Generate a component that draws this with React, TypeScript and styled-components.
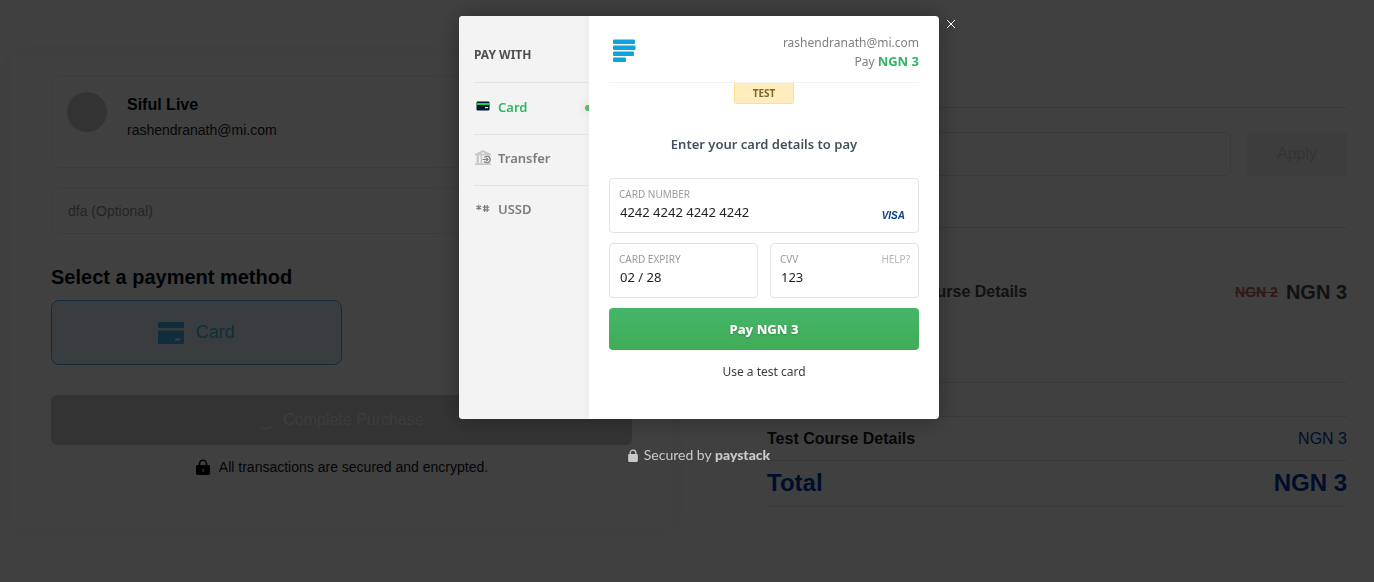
import React from "react";
import styled, { createGlobalStyle, css } from "styled-components";

const GlobalStyle = createGlobalStyle`
  *, *::before, *::after { box-sizing: border-box; }
  body {
    margin: 0;
    background: #ffffff;
    font-family: "Liberation Sans", Arial, sans-serif;
  }
  button, input { font: inherit; }
  h1, h2, p { margin: 0; }
`;

const modalFont = css`
  font-family: "Noto Sans", "Open Sans", sans-serif;
`;

/* Checkout page */

const Page = styled.main`
  display: grid;
  grid-template-columns: 661fr 580fr;
  gap: 95px;
  align-items: start;
  min-height: 100vh;
  padding: 56px 27px 54px 11px;
`;

const CheckoutCard = styled.section`
  padding: 20px 40px 48px;
  box-shadow: 0 0 28px rgba(0, 0, 0, 0.06);
`;

const UserBox = styled.div`
  display: flex;
  gap: 20px;
  height: 92px;
  padding: 15px;
  border: 1px solid #ececec;
  border-radius: 8px;
`;

const Avatar = styled.div`
  width: 40px;
  height: 40px;
  border-radius: 50%;
  background: #cccccc;
`;

const UserName = styled.p`
  font-size: 16px;
  line-height: 26px;
  font-weight: 700;
  color: #000c18;
`;

const UserEmail = styled.p`
  font-size: 14px;
  line-height: 24px;
  color: #222222;
`;

const NoteInput = styled.input`
  display: block;
  width: 100%;
  height: 46px;
  margin-top: 20px;
  padding: 0 16px;
  border: 1px solid #ececec;
  border-radius: 8px;
  background: transparent;
  font-size: 14px;
  &::placeholder { color: #909090; opacity: 1; }
`;

const MethodTitle = styled.h1`
  margin-top: 30px;
  font-size: 20px;
  line-height: 26px;
  color: #000c18;
`;

const MethodButton = styled.button`
  display: flex;
  align-items: center;
  justify-content: center;
  gap: 12px;
  width: 50%;
  height: 65px;
  margin-top: 10px;
  border: 1px solid #44b4f0;
  border-radius: 8px;
  background: #e8f4fc;
  color: #44b4f0;
  font-size: 18px;
`;

const PurchaseButton = styled.button`
  display: flex;
  align-items: center;
  justify-content: center;
  gap: 10px;
  width: 100%;
  height: 50px;
  margin-top: 30px;
  border: 0;
  border-radius: 6px;
  background: #cccccc;
  color: #f0f0f0;
  font-size: 16px;
`;

const SecureNote = styled.p`
  display: flex;
  align-items: center;
  justify-content: center;
  gap: 8px;
  margin-top: 10px;
  font-size: 14px;
  line-height: 24px;
  color: #111111;
`;

/* Order summary */

const Summary = styled.section`
  padding-top: 51px;
`;

const CouponRow = styled.form`
  display: flex;
  gap: 16px;
  height: 121px;
  padding-top: 24px;
  border-top: 1px solid #e2e2e2;
  border-bottom: 1px solid #e2e2e2;
`;

const CouponInput = styled.input`
  flex: 1;
  min-width: 0;
  height: 44px;
  padding: 0 16px;
  border: 1px solid #e2e2e2;
  border-radius: 6px;
  background: transparent;
`;

const ApplyButton = styled.button`
  width: 100px;
  height: 44px;
  border: 0;
  border-radius: 4px;
  background: #f4f4f4;
  color: #cccccc;
  font-size: 16px;
`;

const CourseRow = styled.div`
  display: flex;
  align-items: center;
  gap: 8px;
  height: 155px;
  padding-bottom: 26px;
  border-bottom: 1px solid #e2e2e2;
`;

const CourseName = styled.h2`
  flex: 1;
  padding-left: 112px;
  font-size: 16px;
  color: #44474f;
`;

const OldPrice = styled.s`
  font-size: 14px;
  font-weight: 700;
  color: #c86464;
`;

const Price = styled.strong`
  font-size: 20px;
  color: #44474f;
`;

const Totals = styled.table`
  width: 100%;
  margin-top: 33px;
  border-collapse: collapse;
  tr { border-top: 1px solid #e2e2e2; border-bottom: 1px solid #e2e2e2; }
  th, td { height: 44px; padding: 0; font-size: 16px; }
  th { text-align: left; color: #181818; }
  td { text-align: right; color: #0038a8; }
`;

const TotalRow = styled.tr`
  && th, && td {
    height: 46px;
    padding-bottom: 2px;
    font-size: 24px;
    font-weight: 700;
    color: #0038a8;
  }
`;

/* Payment dialog */

const Overlay = styled.div`
  position: fixed;
  inset: 0;
  display: flex;
  flex-direction: column;
  align-items: center;
  padding: 16px 0 0 24px;
  background: rgba(0, 0, 0, 0.75);
  ${modalFont}
`;

const Dialog = styled.div`
  position: relative;
  display: flex;
  width: 480px;
  max-width: 100%;
  border-radius: 4px;
  background: #ffffff;
  box-shadow: 0 0 24px rgba(0, 0, 0, 0.35);
`;

const CloseButton = styled.button`
  position: absolute;
  top: 0;
  right: -20px;
  display: flex;
  align-items: center;
  justify-content: center;
  width: 16px;
  height: 16px;
  padding: 0;
  border: 0;
  background: none;
`;

const Channels = styled.nav`
  width: 130px;
  padding-left: 15px;
  overflow: hidden;
  border-radius: 4px 0 0 4px;
  background: linear-gradient(to left, #efefef, #f3f3f3 8px);
`;

const ChannelsTitle = styled.h2`
  padding: 29px 0 17px;
  font-size: 12px;
  line-height: 20px;
  color: #4f4f4f;
`;

const Channel = styled.button<{ $active?: boolean }>`
  position: relative;
  display: flex;
  align-items: center;
  gap: 6px;
  width: 100%;
  height: ${(p) => (p.$active ? "52px" : "51px")};
  padding: 0 0 4px;
  border: 0;
  border-top: 1px solid #e2e2e2;
  background: none;
  font-size: 13px;
  font-weight: 600;
  color: ${(p) => (p.$active ? "#2fb566" : "#7c7c7c")};
`;

const ActiveDot = styled.span`
  position: absolute;
  top: 22px;
  right: -2px;
  width: 6px;
  height: 6px;
  border-radius: 50%;
  background: #5cb860;
  box-shadow: 0 0 8px 4px rgba(76, 175, 80, 0.08);
`;

const Content = styled.div`
  flex: 1;
  padding: 0 20px 37px;
  text-align: center;
`;

const Header = styled.header`
  display: flex;
  justify-content: space-between;
  height: 67px;
  padding: 18px 0 0 4px;
  border-bottom: 1px solid #f2f2f2;
`;

const Logo = styled.svg`
  margin-top: 5px;
`;

const Payer = styled.div`
  text-align: right;
  font-size: 12px;
  line-height: 18px;
  color: #7f7f7f;
  strong { font-size: 13px; color: #2fb566; }
`;

const TestBadge = styled.span`
  display: block;
  width: 60px;
  height: 21px;
  margin: 0 auto;
  border: 1px solid #ffe08a;
  border-top: 0;
  border-radius: 0 0 3px 3px;
  background: #ffedbd;
  font-size: 10px;
  line-height: 20px;
  font-weight: 700;
  color: #7d6528;
`;

const Title = styled.h2`
  margin: 30px 0 24px;
  font-size: 13px;
  line-height: 20px;
  font-weight: 600;
  color: #44505f;
`;

const Fields = styled.div`
  display: grid;
  grid-template-columns: 1fr 1fr;
  gap: 10px 12px;
`;

const Field = styled.div<{ $wide?: boolean }>`
  position: relative;
  grid-column: ${(p) => (p.$wide ? "1 / -1" : "auto")};
  display: flex;
  flex-wrap: wrap;
  align-content: flex-start;
  justify-content: space-between;
  height: 55px;
  padding: 7px 8px 0 9px;
  border: 1px solid #e2e2e2;
  border-radius: 4px;
  font-size: 10px;
  line-height: 16px;
  color: #9a9a9a;
  input {
    width: 100%;
    height: 20px;
    padding: 0 1px;
    border: 0;
    outline: 0;
    background: none;
    font-size: 13px;
    line-height: 20px;
    color: #222222;
  }
`;

const HelpLink = styled.a`
  color: #b5b5b5;
  text-decoration: none;
`;

const VisaMark = styled.span`
  position: absolute;
  right: 13px;
  bottom: 9px;
  font-family: "Liberation Sans", Arial, sans-serif;
  font-size: 10px;
  line-height: 14px;
  font-weight: 700;
  font-style: italic;
  color: #0a3c8c;
`;

const PayButton = styled.button`
  width: 100%;
  height: 42px;
  margin-top: 10px;
  border: 0;
  border-radius: 4px;
  background: linear-gradient(#44b669, #42ab56);
  font-size: 13px;
  font-weight: 800;
  color: #ffffff;
  text-shadow: 0 1px 2px rgba(0, 0, 0, 0.2);
`;

const TestCardButton = styled.button`
  margin-top: 12px;
  padding: 0;
  border: 0;
  background: none;
  font-size: 12px;
  line-height: 20px;
  color: #3c3c3c;
`;

const SecuredBy = styled.p`
  display: flex;
  align-items: center;
  gap: 6px;
  margin-top: 26px;
  font-family: Lato, sans-serif;
  font-size: 14px;
  line-height: 20px;
  color: #c9c9c9;
  strong { font-weight: 900; }
`;

const PadlockIcon = ({ size, color, keyhole }: { size: number; color: string; keyhole?: boolean }) => (
  <svg width={keyhole ? size : size - 3} height={size} viewBox={keyhole ? "-1 0 16 16" : "1 0 12 16"} aria-hidden="true">
    <path d="M3.500 7V4.800a3.500 3.500 0 0 1 7 0V7" fill="none" stroke={color} strokeWidth="1.600" />
    <rect x={keyhole ? 0 : 1} y="6" width={keyhole ? 14 : 12} height="10" rx="1.400" fill={color} />
    {keyhole && <rect x="6.300" y="9.500" width="1.500" height="3.500" fill="#aaaaaa" />}
  </svg>
);

const MethodCardIcon = () => (
  <svg width="26" height="24" viewBox="0 0 26 24" aria-hidden="true">
    <path fill="#44b4f0" d="M1.5 1h23A1.5 1.5 0 0 1 26 2.500V7H0V2.500A1.500 1.500 0 0 1 1.500 1Z" />
    <path fill="#44b4f0" fillRule="evenodd" d="M0 9.500h26v12a1.500 1.500 0 0 1-1.500 1.500h-23A1.500 1.500 0 0 1 0 21.500ZM17 17.500v2h5v-2Z" />
  </svg>
);

const Spinner = () => (
  <svg width="14" height="22" viewBox="0 0 14 22" aria-hidden="true">
    <path d="M1.500 17.500a7.500 7.500 0 0 0 11 0" fill="none" stroke="#f0f0f0" strokeWidth="1.200" />
  </svg>
);

const CardIcon = () => (
  <svg width="18" height="16" viewBox="0 0 18 16" aria-hidden="true">
    <rect x="2.500" y="2.500" width="13" height="9" rx="1.200" fill="#011b33" />
    <rect x="2.500" y="4" width="13" height="2" fill="#24d04f" />
    <rect x="11" y="8" width="3" height="1.200" fill="#e8edf2" />
  </svg>
);

const TransferIcon = () => (
  <svg width="18" height="16" viewBox="0 0 18 16" aria-hidden="true">
    <path fill="#c8c8c8" fillRule="evenodd" d="M9 0 17 4v1.500H1V4ZM9 2.200a1 1 0 1 0 0 2 1 1 0 0 0 0-2Z" />
    <path fill="#c8c8c8" d="M2.500 5.500H5v7.500H2.500ZM6.500 5.500h1.700v7.500H6.500ZM12 5.500h3.500v7.500H12ZM1 13.200h16V15H1Z" />
    <circle cx="12.800" cy="9.500" r="4.200" fill="#f3f3f3" />
    <path d="M10.200 7.700a3.300 3.300 0 1 1 0 3.600M8.500 9.500h5.300M12.200 7.800l1.800 1.700-1.800 1.700" fill="none" stroke="#7c7c7c" strokeWidth="1.200" />
  </svg>
);

const UssdIcon = () => (
  <svg width="18" height="16" viewBox="0 0 18 16" aria-hidden="true">
    <path d="M4.800 3.800v5.400M2.400 5.100l4.800 2.800M7.200 5.100 2.400 7.900" stroke="#7c7c7c" strokeWidth="1.100" />
    <path d="M10.600 4v7M13.200 4v7M8.800 6.200h6.400M8.800 8.900h6.400" stroke="#7c7c7c" strokeWidth="1.200" />
  </svg>
);

export default function App() {
  return (
    <>
      <GlobalStyle />
      <Page>
        <CheckoutCard>
          <UserBox>
            <Avatar />
            <div>
              <UserName>Siful Live</UserName>
              <UserEmail>rashendranath@mi.com</UserEmail>
            </div>
          </UserBox>
          <NoteInput aria-label="dfa" placeholder="dfa (Optional)" />
          <MethodTitle>Select a payment method</MethodTitle>
          <MethodButton type="button">
            <MethodCardIcon />
            Card
          </MethodButton>
          <PurchaseButton type="button">
            <Spinner />
            Complete Purchase
          </PurchaseButton>
          <SecureNote>
            <PadlockIcon size={16} color="#000000" keyhole />
            All transactions are secured and encrypted.
          </SecureNote>
        </CheckoutCard>

        <Summary>
          <CouponRow>
            <CouponInput aria-label="Coupon" />
            <ApplyButton type="button">Apply</ApplyButton>
          </CouponRow>
          <CourseRow>
            <CourseName>Test Course Details</CourseName>
            <OldPrice>NGN 2</OldPrice>
            <Price>NGN 3</Price>
          </CourseRow>
          <Totals>
            <tbody>
              <tr>
                <th scope="row">Test Course Details</th>
                <td>NGN 3</td>
              </tr>
              <TotalRow>
                <th scope="row">Total</th>
                <td>NGN 3</td>
              </TotalRow>
            </tbody>
          </Totals>
        </Summary>
      </Page>

      <Overlay>
        <Dialog role="dialog" aria-label="Payment">
          <Channels>
            <ChannelsTitle>PAY WITH</ChannelsTitle>
            <Channel type="button" $active>
              <CardIcon />
              Card
              <ActiveDot />
            </Channel>
            <Channel type="button">
              <TransferIcon />
              Transfer
            </Channel>
            <Channel type="button">
              <UssdIcon />
              USSD
            </Channel>
          </Channels>
          <Content>
            <Header>
              <Logo width="23" height="23" viewBox="0 0 23 23" aria-hidden="true">
                <g fill="#0ba4db">
                  <rect x="0" y="0.500" width="22" height="4.500" rx="1" />
                  <rect x="0" y="6.500" width="22.500" height="4.500" rx="1" />
                  <rect x="0" y="12.500" width="21" height="4.500" rx="1" />
                  <rect x="0" y="18.500" width="13" height="4.500" rx="1" />
                </g>
              </Logo>
              <Payer>
                <div>rashendranath@mi.com</div>
                <div>
                  Pay <strong>NGN 3</strong>
                </div>
              </Payer>
            </Header>
            <TestBadge>TEST</TestBadge>
            <Title>Enter your card details to pay</Title>
            <Fields>
              <Field $wide>
                <label htmlFor="number">CARD NUMBER</label>
                <input id="number" defaultValue="4242 4242 4242 4242" />
                <VisaMark>VISA</VisaMark>
              </Field>
              <Field>
                <label htmlFor="expiry">CARD EXPIRY</label>
                <input id="expiry" defaultValue="02 / 28" />
              </Field>
              <Field>
                <label htmlFor="cvv">CVV</label>
                <HelpLink href="#help">HELP?</HelpLink>
                <input id="cvv" defaultValue="123" />
              </Field>
            </Fields>
            <PayButton type="button">Pay NGN 3</PayButton>
            <TestCardButton type="button">Use a test card</TestCardButton>
          </Content>
          <CloseButton type="button" aria-label="Close">
            <svg width="10" height="10" viewBox="0 0 10 10" aria-hidden="true">
              <path d="M1 1l8 8M9 1 1 9" stroke="#ffffff" strokeWidth="1" />
            </svg>
          </CloseButton>
        </Dialog>
        <SecuredBy>
          <PadlockIcon size={13} color="#c9c9c9" />
          <span>
            Secured by <strong>paystack</strong>
          </span>
        </SecuredBy>
      </Overlay>
    </>
  );
}
